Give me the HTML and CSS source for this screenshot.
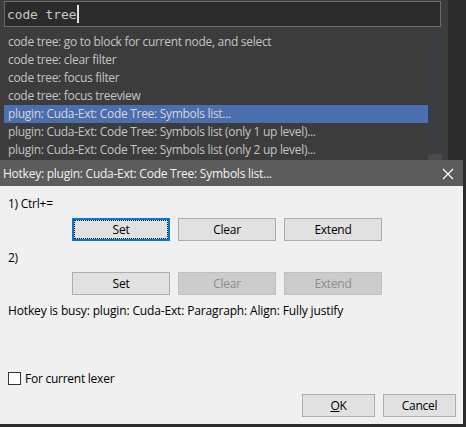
FILE: index.html
```html
<!DOCTYPE html>
<html>
<head>
  <title>Hotkey</title>
  <meta charset="utf-8">
  <link rel="stylesheet" href="styles.css">
</head>
<body>
  <div class="palette">
    <div class="search"><span class="query">code tree</span><span class="caret"></span></div>
    <div class="list-wrap">
      <ul class="list">
        <li>code tree: go to block for current node, and select</li>
        <li>code tree: clear filter</li>
        <li>code tree: focus filter</li>
        <li>code tree: focus treeview</li>
        <li class="selected">plugin: Cuda-Ext: Code Tree: Symbols list...</li>
        <li>plugin: Cuda-Ext: Code Tree: Symbols list (only 1 up level)...</li>
        <li>plugin: Cuda-Ext: Code Tree: Symbols list (only 2 up level)...</li>
      </ul>
      <div class="scrollbar"><div class="thumb"></div></div>
    </div>
  </div>

  <div class="dialog">
    <div class="titlebar">
      <span>Hotkey: plugin: Cuda-Ext: Code Tree: Symbols list...</span>
      <svg class="close" width="12" height="12" viewBox="0 0 12 12">
        <path d="M1 1 L11 11 M11 1 L1 11" stroke="#ffffff" stroke-width="1.2" fill="none"/>
      </svg>
    </div>
    <div class="dlg-body">
      <div class="key-label first">1) Ctrl+=</div>
      <div class="btn-row">
        <button class="btn focused">Set</button>
        <button class="btn">Clear</button>
        <button class="btn">Extend</button>
      </div>
      <div class="key-label">2)</div>
      <div class="btn-row">
        <button class="btn">Set</button>
        <button class="btn" disabled>Clear</button>
        <button class="btn" disabled>Extend</button>
      </div>
      <div class="busy">Hotkey is busy: plugin: Cuda-Ext: Paragraph: Align: Fully justify</div>
      <label class="check"><span class="box"></span>For current lexer</label>
      <div class="footer">
        <button class="btn small"><u>O</u>K</button>
        <button class="btn small">Cancel</button>
      </div>
    </div>
  </div>
</body>
</html>
```

FILE: styles.css
```css
/* command palette + hotkey dialog */

body {
  margin: 0;
  width: 466px;
  height: 427px;
  overflow: hidden;
  background-color: #2b2b2b;
  font-family: "Open Sans", "Noto Sans", sans-serif;
  font-size: 12px;
}

.palette {
  width: 448px;
  height: 160px;
  background-color: #3c3c3c;
  padding-top: 1px;
  box-sizing: border-box;
  overflow: hidden;
}

.search {
  margin-left: 4px;
  width: 437px;
  height: 26px;
  box-sizing: border-box;
  border: 1px solid #6b6b6b;
  background-color: #2b2b2b;
  display: flex;
  align-items: center;
  padding-left: 2px;
}

.query {
  font-family: "DejaVu Sans Mono", monospace;
  font-size: 12.8px;
  color: #c8c8c8;
}

.caret {
  width: 2px;
  height: 18px;
  background-color: #e0e0e0;
  margin-left: 1px;
}

.list-wrap {
  display: flex;
  margin-top: 6px;
  margin-left: 4px;
}

.list {
  list-style: none;
  margin: 0;
  padding: 0;
  width: 424px;
}

.list li {
  height: 18px;
  line-height: 18px;
  padding-left: 4px;
  color: #c4c4c4;
  white-space: nowrap;
  letter-spacing: -0.3px;
}

.list li.selected {
  background-color: #4b6eaf;
  color: #d6d6d6;
}

.scrollbar {
  width: 14px;
  height: 127px;
  background-color: #3a3e42;
  display: flex;
  flex-direction: column;
  justify-content: flex-end;
}

.thumb {
  height: 6px;
  background-color: #4a4a4a;
}

.dialog {
  width: 463px;
  height: 264px;
  background-color: #f0f0f0;
}

.titlebar {
  height: 26px;
  background-color: #5c5c5c;
  color: #f2f2f2;
  display: flex;
  align-items: center;
  justify-content: space-between;
  padding: 0 9px 0 3px;
  letter-spacing: -0.25px;
}

.close {
  margin-top: 1px;
}

.dlg-body {
  padding: 0 7px 0 8px;
  color: #000;
  display: flex;
  flex-direction: column;
  height: 238px;
  box-sizing: border-box;
}

.key-label {
  height: 16px;
  line-height: 16px;
  margin-top: 9px;
  letter-spacing: -0.25px;
}

.key-label.first {
  margin-top: 10px;
}

.btn-row {
  display: flex;
  gap: 8px;
  margin-top: 6px;
  padding-left: 64px;
}

.btn {
  width: 98px;
  height: 23px;
  border: 1px solid #adadad;
  background-color: #e1e1e1;
  font-family: "Open Sans", "Noto Sans", sans-serif;
  font-size: 12px;
  color: #000;
  padding: 0;
  letter-spacing: -0.25px;
}

.btn.focused {
  border: 2px solid #0078d7;
  outline: 1px dotted #000;
  outline-offset: -3px;
}

.btn:disabled {
  background-color: #cccccc;
  border-color: #bfbfbf;
  color: #8d8d8d;
}

.busy {
  margin-top: 8px;
  height: 16px;
  line-height: 16px;
  letter-spacing: -0.15px;
}

.check {
  display: flex;
  align-items: center;
  margin-top: 51px;
  height: 16px;
  letter-spacing: -0.25px;
}

.box {
  width: 11px;
  height: 11px;
  border: 1px solid #333;
  background-color: #fff;
  margin-right: 4px;
}

.footer {
  display: flex;
  justify-content: flex-end;
  gap: 8px;
  margin-top: 8px;
}

.btn.small {
  width: 73px;
}
```
